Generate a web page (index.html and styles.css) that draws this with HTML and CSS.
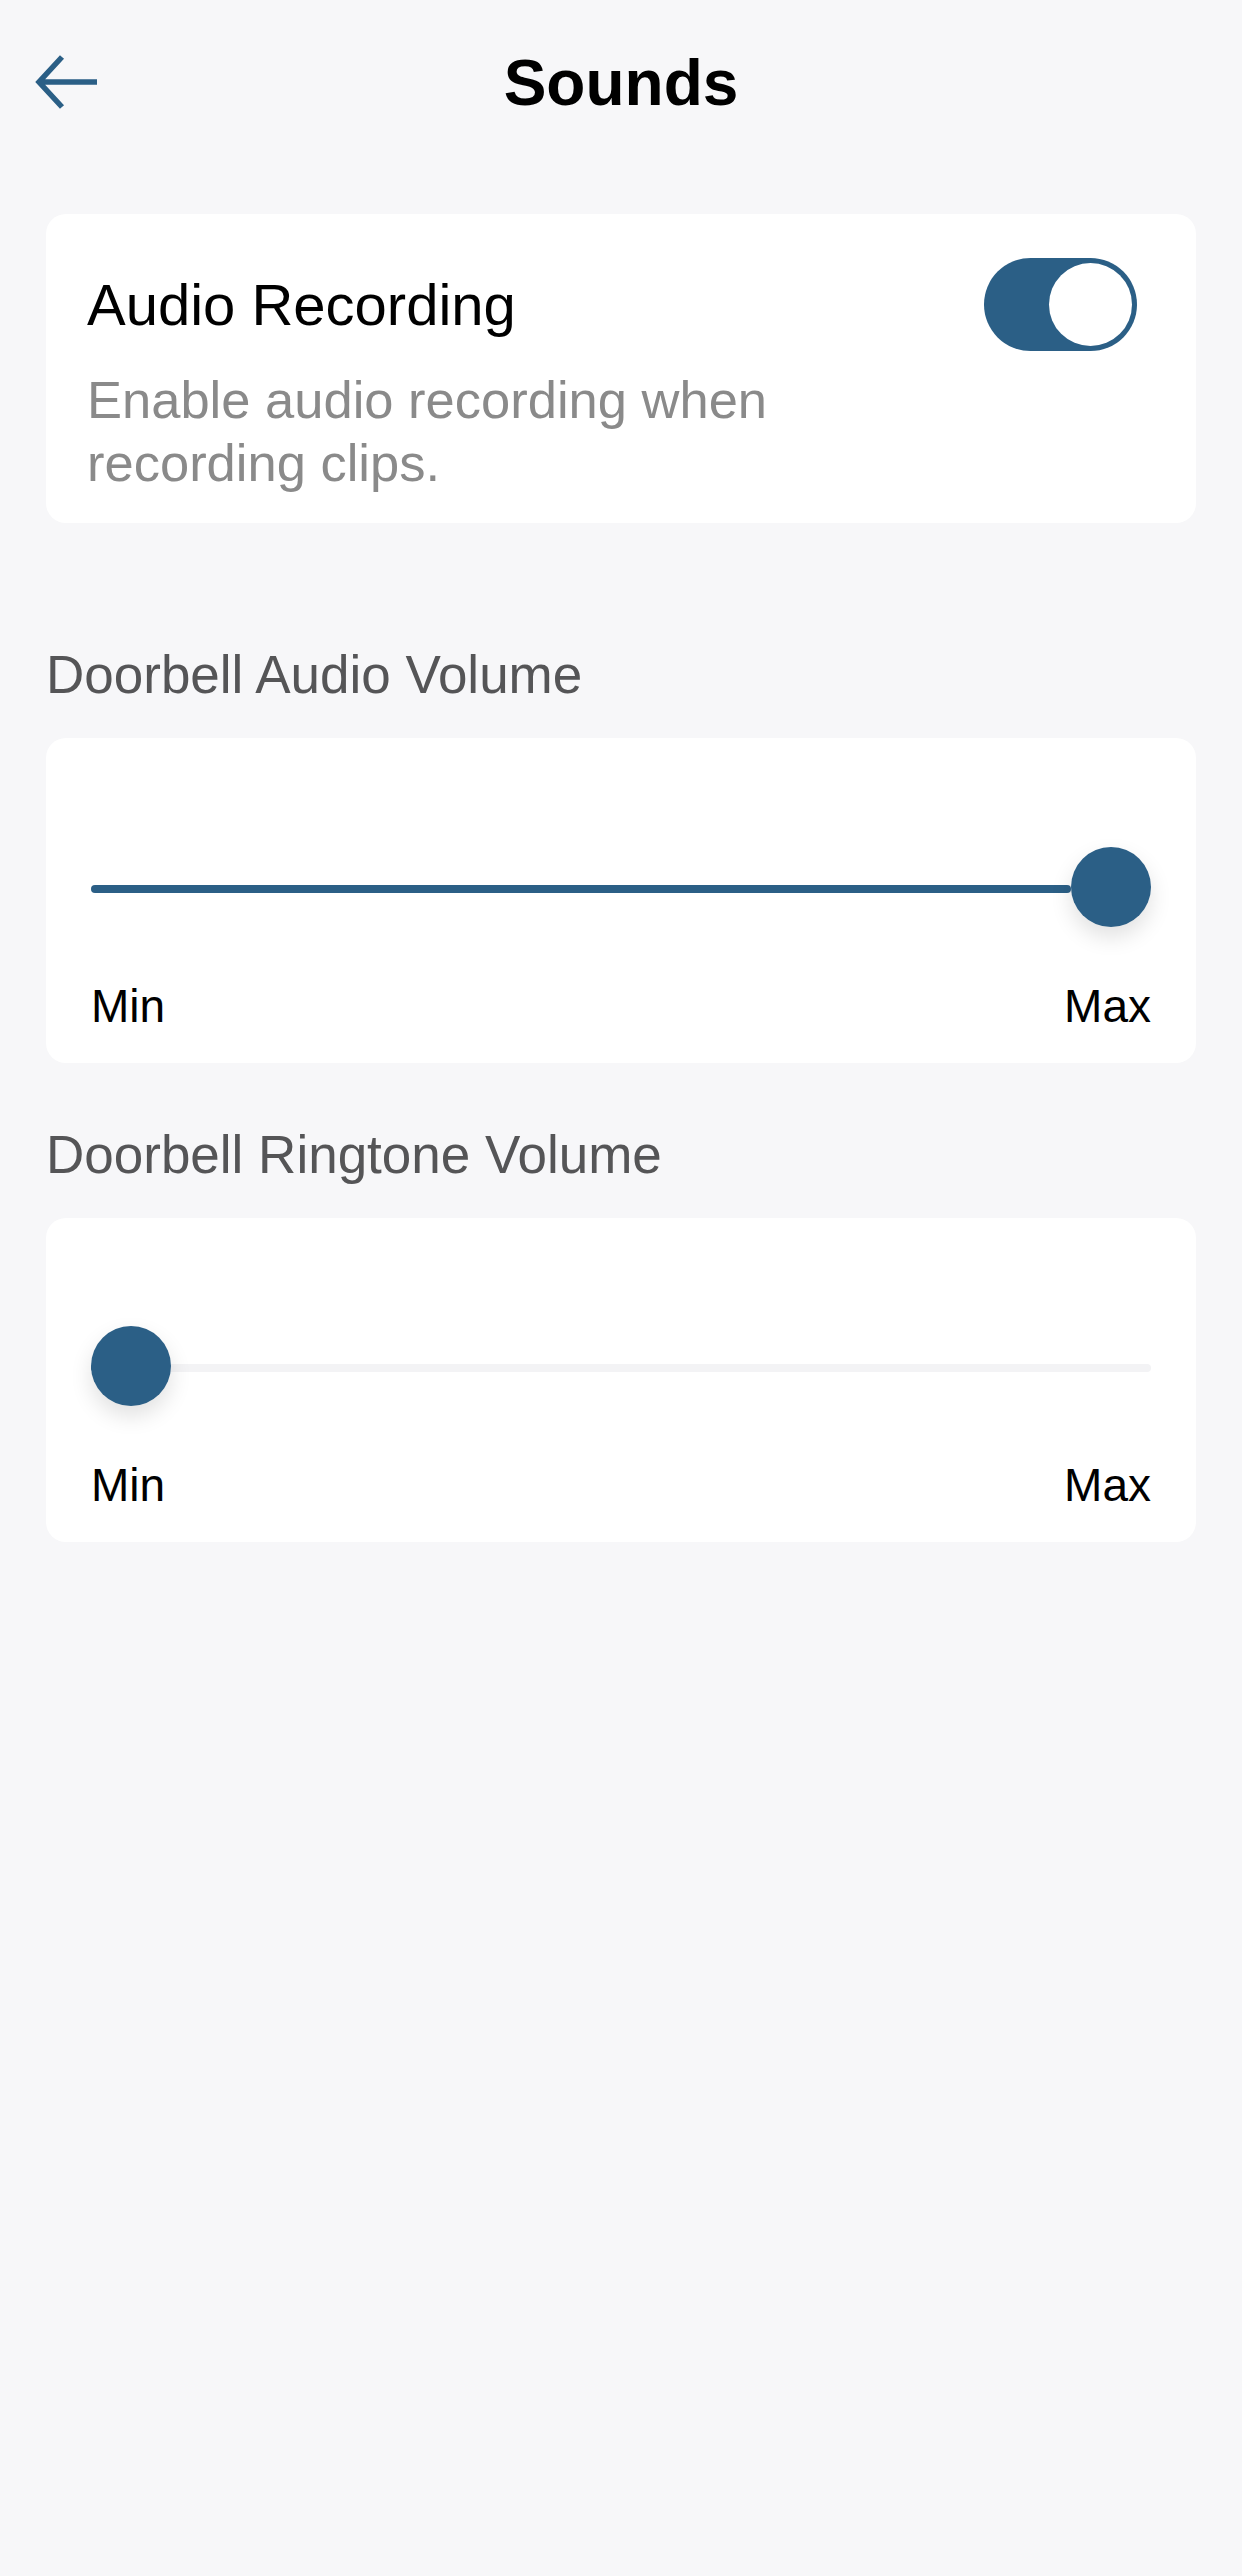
FILE: index.html
```html
<!DOCTYPE html>
<html lang="en">
<head>
<meta charset="utf-8">
<title>Sounds</title>
<link rel="stylesheet" href="styles.css">
</head>
<body>
<header class="topbar">
  <div class="back">
    <svg width="66" height="56" viewBox="0 0 66 56" aria-hidden="true">
      <path d="M63 28 H5 M28 3 L5 28 L28 53" fill="none" stroke="#2b5f86" stroke-width="5.5" stroke-linejoin="miter"/>
    </svg>
  </div>
  <h1 class="title">Sounds</h1>
  <div class="spacer"></div>
</header>
<main class="content">
  <section class="card card-toggle">
    <div class="toggle-row">
      <div class="toggle-title">Audio Recording</div>
      <div class="switch on"><div class="knob"></div></div>
    </div>
    <p class="desc">Enable audio recording when recording clips.</p>
  </section>

  <h2 class="section-label first">Doorbell Audio Volume</h2>
  <section class="card card-slider">
    <div class="slider">
      <div class="track"></div>
      <div class="fill" style="width: 100%"></div>
      <div class="thumb" style="left: 100%"></div>
    </div>
    <div class="range-labels"><span>Min</span><span>Max</span></div>
  </section>

  <h2 class="section-label">Doorbell Ringtone Volume</h2>
  <section class="card card-slider">
    <div class="slider">
      <div class="track"></div>
      <div class="fill" style="width: 0%"></div>
      <div class="thumb" style="left: 0%"></div>
    </div>
    <div class="range-labels"><span>Min</span><span>Max</span></div>
  </section>
</main>
</body>
</html>
```
FILE: styles.css
```css
* { box-sizing: border-box; }
html, body {
  margin: 0;
  padding: 0;
}
body {
  background: #f7f7f9;
  font-family: "Liberation Sans", Arial, sans-serif;
  color: #000;
  min-height: 2577px;
}
.topbar {
  display: grid;
  grid-template-columns: 200px 1fr 200px;
  align-items: center;
  height: 164px;
}
.back {
  padding-left: 34px;
  display: flex;
  align-items: center;
  height: 56px;
}
.back svg { display: block; }
.title {
  margin: 0;
  text-align: center;
  font-size: 64px;
  font-weight: 700;
  line-height: 76px;
  padding-top: 2px;
}
.content {
  padding: 0 46px;
}
.card {
  background: #fff;
  border-radius: 20px;
}
.card-toggle {
  margin-top: 50px;
  padding: 44px 59px 29px 41px;
}
.toggle-row {
  display: flex;
  align-items: center;
  justify-content: space-between;
  height: 93px;
}
.toggle-title {
  font-size: 58px;
  line-height: 70px;
}
.switch {
  width: 153px;
  height: 93px;
  border-radius: 47px;
  background: #2b5f86;
  position: relative;
}
.switch .knob {
  position: absolute;
  top: 5px;
  right: 5px;
  width: 83px;
  height: 83px;
  border-radius: 50%;
  background: #fff;
}
.desc {
  margin: 17px 0 0;
  max-width: 720px;
  font-size: 52.5px;
  line-height: 63px;
  color: #8a8a8a;
}
.section-label {
  margin: 61px 0 32px;
  font-size: 53px;
  line-height: 62px;
  font-weight: 400;
  color: #555557;
}
.section-label.first {
  margin-top: 121px;
}
.card-slider {
  padding: 109px 45px 29px;
}
.slider {
  position: relative;
  height: 80px;
  margin: 0 40px;
}
.track, .fill {
  position: absolute;
  top: 38px;
  height: 8px;
  border-radius: 4px;
}
.track {
  left: -40px;
  right: -40px;
  background: #f3f3f5;
}
.fill {
  left: -40px;
  background: #2b5f86;
  min-width: 40px;
}
.thumb {
  position: absolute;
  top: 0;
  width: 80px;
  height: 80px;
  margin-left: -40px;
  border-radius: 50%;
  background: #2b5f86;
  box-shadow: 0 10px 22px rgba(0, 0, 0, 0.12);
}
.range-labels {
  display: flex;
  justify-content: space-between;
  margin-top: 51px;
  font-size: 46px;
  line-height: 56px;
  color: #000;
}
```
